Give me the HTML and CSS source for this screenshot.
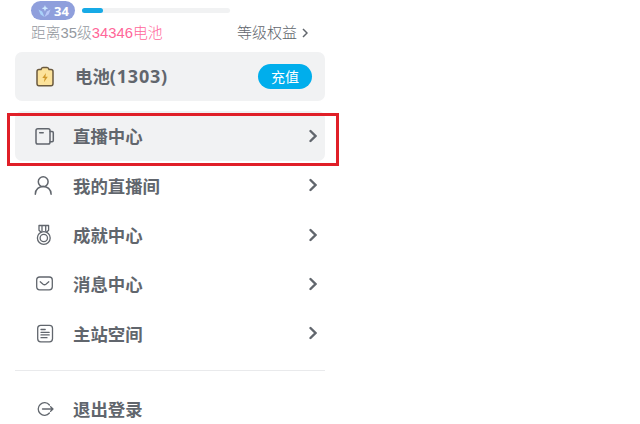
FILE: index.html
```
<!DOCTYPE html>
<html lang="zh-CN">
<head>
    <meta charset="UTF-8">
    <meta name="viewport" content="width=device-width, initial-scale=1.0">
    <title>直播中心</title>
    <link rel="stylesheet" href="styles.css">
</head>
<body>
    <div class="panel">
        <div class="level">
            <div class="level-top">
                <span class="badge">
                    <svg class="badge-icon" viewBox="0 0 14 14">
                        <path d="M7.5 0.5 L8.4 3 L11 4 L8.4 5 L7.5 7.5 L6.6 5 L4 4 L6.6 3 Z" fill="#cfeaff"/>
                        <path d="M0.5 5.5 L4.5 7.5 L7 13.5 L2.8 10.8 Z" fill="#a9d2fa"/>
                        <path d="M13.5 5.5 L9.5 7.5 L7 13.5 L11.5 10.5 Z" fill="#b9c8f8"/>
                    </svg>
                    34
                </span>
                <div class="progress"><div class="progress-bar"></div></div>
            </div>
            <div class="level-info">
                <span>距离35级<span class="pink">34346电池</span></span>
                <a class="rights">等级权益
                    <svg class="small-arrow" viewBox="0 0 6 10"><path d="M1 1 L5 5 L1 9"/></svg>
                </a>
            </div>
        </div>

        <div class="row battery">
            <svg class="icon" viewBox="0 0 24 24">
                <path d="M6 4.5 H8 Q8.5 2.5 10 2.5 H14 Q15.5 2.5 16 4.5 H18 Q20 4.5 20 6.5 V18.5 Q20 20.8 18 20.8 H6 Q4 20.8 4 18.5 V6.5 Q4 4.5 6 4.5 Z" fill="#fce39b" stroke="#6b5a3e" stroke-width="1.5"/>
                <path d="M13 8 L9.3 13 H11.7 L10.9 17.2 L14.8 11.7 H12.4 Z" fill="#d19a2c" stroke="none"/>
            </svg>
            <span class="label">电池<span class="count">(1303)</span></span>
            <button class="charge">充值</button>
        </div>

        <div class="menu">
            <div class="row active">
                <svg class="icon" viewBox="0 0 24 24">
                    <rect x="3" y="4.8" width="14" height="15.2" rx="1.8"/>
                    <path d="M17.2 7.5 H19.1 Q20.3 7.5 20.3 8.7 V16.5 Q20.3 17.7 19.1 17.7 H17.2 M6.7 8.7 H10.2"/>
                </svg>
                <span class="label">直播中心</span>
                <svg class="arrow" viewBox="0 0 8 14"><path d="M1.5 2 L6.5 7 L1.5 12"/></svg>
            </div>
            <div class="row">
                <svg class="icon" viewBox="0 0 24 24">
                    <circle cx="10.2" cy="8.7" r="4.9"/>
                    <path d="M2.3 21.3 C2.3 10.8 18.1 10.8 18.1 21.3"/>
                </svg>
                <span class="label">我的直播间</span>
                <svg class="arrow" viewBox="0 0 8 14"><path d="M1.5 2 L6.5 7 L1.5 12"/></svg>
            </div>
            <div class="row">
                <svg class="icon thin" viewBox="0 0 24 24">
                    <path d="M6 2.5 H15.6 V7.3 L13.5 9.3 M6 2.5 V7.3 L8.1 9.3 M9 2.5 V8 M12.7 2.5 V8"/>
                    <circle cx="10.8" cy="15" r="6.4"/>
                    <circle cx="10.8" cy="15" r="3.7"/>
                </svg>
                <span class="label">成就中心</span>
                <svg class="arrow" viewBox="0 0 8 14"><path d="M1.5 2 L6.5 7 L1.5 12"/></svg>
            </div>
            <div class="row">
                <svg class="icon thin" viewBox="0 0 24 24">
                    <rect x="3.7" y="5" width="15.6" height="12.8" rx="3"/>
                    <path d="M7.2 9.8 L10.1 12.2 Q11.5 13.3 12.9 12.2 L15.8 9.8"/>
                </svg>
                <span class="label">消息中心</span>
                <svg class="arrow" viewBox="0 0 8 14"><path d="M1.5 2 L6.5 7 L1.5 12"/></svg>
            </div>
            <div class="row">
                <svg class="icon thin" viewBox="0 0 24 24">
                    <rect x="4.7" y="4.3" width="14.8" height="16.5" rx="3"/>
                    <path d="M8 8.5 H12.2 M8 11.3 H16.2 M8 13.9 H16.2 M8 16.7 H14"/>
                </svg>
                <span class="label">主站空间</span>
                <svg class="arrow" viewBox="0 0 8 14"><path d="M1.5 2 L6.5 7 L1.5 12"/></svg>
            </div>
            <div class="highlight"></div>
        </div>

        <div class="row logout">
            <svg class="icon thin" viewBox="0 0 24 24">
                <path d="M16.4 9 A6.3 6.3 0 1 0 16.4 17 M9.5 13 H20 M17.6 10.8 L20 13 L17.6 15.2"/>
            </svg>
            <span class="label">退出登录</span>
        </div>
    </div>
</body>
</html>
```
FILE: styles.css
```
* {
    margin: 0;
    padding: 0;
    box-sizing: border-box;
}

body {
    background: #fff;
    color: #61666d;
    font-family: "Liberation Sans", "Noto Sans CJK SC", sans-serif;
    height: 424px;
    overflow: hidden;
}

.panel {
    width: 310px;
    margin-left: 15px;
}

.level {
    height: 52px;
    padding: 1px 16px 0;
}

.level-top {
    display: flex;
    align-items: center;
    gap: 7px;
    height: 19px;
}

.badge {
    display: flex;
    align-items: center;
    gap: 3px;
    width: 44px;
    height: 19px;
    padding-left: 7px;
    border-radius: 10px;
    background: #8f9fdc;
    color: #fff;
    font: bold 13px "Noto Sans", sans-serif;
}

.badge-icon {
    width: 13px;
    height: 14px;
}

.progress {
    width: 148px;
    height: 5px;
    border-radius: 3px;
    background: #f1f2f3;
}

.progress-bar {
    width: 21px;
    height: 5px;
    border-radius: 3px;
    background: #17aae6;
}

.level-info {
    display: flex;
    justify-content: space-between;
    align-items: center;
    height: 26px;
    font-size: 14.8px;
    font-weight: 300;
    line-height: 26px;
    color: #9499a0;
    white-space: nowrap;
}

.pink {
    color: #ff6699;
}

.rights {
    display: flex;
    align-items: center;
    gap: 5px;
    margin-right: 1px;
    font-size: 15px;
    color: #61666d;
}

.small-arrow {
    width: 6px;
    height: 10px;
    fill: none;
    stroke: #61666d;
    stroke-width: 1.5;
}

.row {
    display: flex;
    align-items: center;
    height: 49.3px;
    padding: 0 8px 0 18px;
    border-radius: 7px;
}

.battery {
    padding-right: 13px;
    background: #f1f2f3;
}

.active {
    background: #f1f2f3;
}

.icon {
    width: 24px;
    height: 24px;
    fill: none;
    stroke: #61666d;
    stroke-width: 1.5;
    stroke-linecap: round;
    stroke-linejoin: round;
}

.thin {
    stroke-width: 1.3;
}

.label {
    flex: 1;
    margin-left: 16px;
    font: bold 17.4px "Noto Sans CJK SC", sans-serif;
}

.battery .label {
    margin-left: 18px;
    line-height: 24px;
    padding-bottom: 1px;
}

.count {
    font-family: "Noto Sans", sans-serif;
    font-size: 18px;
    letter-spacing: 0.8px;
}

.charge {
    width: 54px;
    height: 25px;
    padding-bottom: 1px;
    border: none;
    border-radius: 13px;
    background: #00aeec;
    color: #fff;
    font: 14px "Noto Sans CJK SC", sans-serif;
}

.arrow {
    width: 8px;
    height: 14px;
    fill: none;
    stroke: #61666d;
    stroke-width: 2.4;
    stroke-linecap: round;
}

.menu {
    position: relative;
    margin-top: 10px;
    padding-bottom: 12px;
    border-bottom: 1px solid #e9eaec;
}

/* red frame around the first entry */
.highlight {
    position: absolute;
    top: 2px;
    left: -8px;
    width: 332px;
    height: 53px;
    border: 3px solid #e01f28;
}

.logout {
    margin-top: 13px;
}
```
